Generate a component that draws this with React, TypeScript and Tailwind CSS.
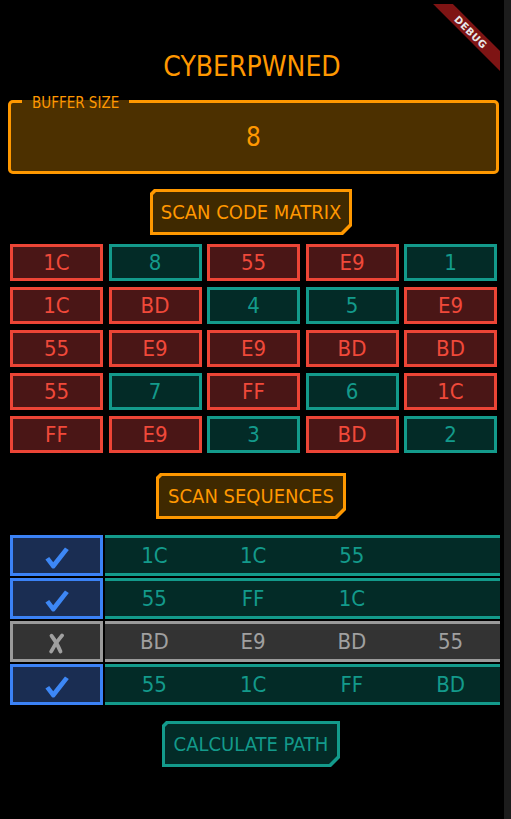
import React from "react";

const font = "font-['Liberation_Sans_Narrow','DejaVu_Sans_Condensed',sans-serif]";

type Tone = "r" | "t";

const matrix: [string, Tone][][] = [
  [["1C", "r"], ["8", "t"], ["55", "r"], ["E9", "r"], ["1", "t"]],
  [["1C", "r"], ["BD", "r"], ["4", "t"], ["5", "t"], ["E9", "r"]],
  [["55", "r"], ["E9", "r"], ["E9", "r"], ["BD", "r"], ["BD", "r"]],
  [["55", "r"], ["7", "t"], ["FF", "r"], ["6", "t"], ["1C", "r"]],
  [["FF", "r"], ["E9", "r"], ["3", "t"], ["BD", "r"], ["2", "t"]],
];

const sequences: { ok: boolean; values: string[] }[] = [
  { ok: true, values: ["1C", "1C", "55", ""] },
  { ok: true, values: ["55", "FF", "1C", ""] },
  { ok: false, values: ["BD", "E9", "BD", "55"] },
  { ok: true, values: ["55", "1C", "FF", "BD"] },
];

function CheckMark() {
  return (
    <svg width="24" height="22" viewBox="0 0 24 22" className="fill-current">
      <path d="M0.4 12.6 L4.2 10 L8.2 15.2 L20 0.4 L23.8 3 L9.8 21 Q8.3 22.2 6.8 21 Z" />
    </svg>
  );
}

function CrossMark() {
  return (
    <svg width="17" height="21" viewBox="0 0 17 21" fill="none" stroke="currentColor" strokeWidth="3.8" strokeLinecap="round">
      <path d="M3.5 2.8 Q8.5 9 12.5 18.5" />
      <path d="M14 2.5 Q8 9 3.2 18.5" />
    </svg>
  );
}

function CutButton({ label, width, teal }: { label: string; width: string; teal?: boolean }) {
  return (
    <div
      className={`mx-auto p-[3px] [clip-path:polygon(4px_0,100%_0,100%_calc(100%_-_9px),calc(100%_-_9px)_100%,0_100%,0_4px)] ${width} ${
        teal ? "bg-[#139a8b]" : "bg-[#ff9800]"
      }`}
    >
      <div
        className={`flex h-[40px] items-center justify-center text-[20px] [clip-path:polygon(3px_0,100%_0,100%_calc(100%_-_8px),calc(100%_-_8px)_100%,0_100%,0_3px)] ${
          teal ? "bg-[#032b27] text-[#139a8b]" : "bg-[#3f2900] text-[#ff9800]"
        }`}
      >
        {label}
      </div>
    </div>
  );
}

export default function App() {
  return (
    <div className={`relative flex h-[819px] w-full overflow-hidden bg-black ${font}`}>
      <main className="w-[504px] px-[8px] pt-[50px]">
        {/* Title */}
        <h1 className="h-[34px] text-center text-[28px] leading-[34px] text-[#ff9800]">CYBERPWNED</h1>

        {/* Buffer size field */}
        <fieldset className="mt-[8px] w-[491px] rounded-[5px] border-[3px] border-[#ff9800] bg-[#4c3000] px-[10px]">
          <legend className="ml-[1px] px-[10px] pt-[4px] text-[15px] leading-[14px] text-[#ff9800]">BUFFER SIZE</legend>
          <div className="flex h-[61px] items-center justify-center pb-[6px] text-[26px] text-[#ff9800]">8</div>
        </fieldset>

        <div className="mt-[15px] pr-[2px]">
          <CutButton label="SCAN CODE MATRIX" width="w-[202px]" />
        </div>

        {/* Code matrix */}
        <div className="ml-[2px] mt-[9px] grid w-[487px] grid-cols-5 gap-x-[5.5px] gap-y-[6px]">
          {matrix.flat().map(([v, tone], i) => (
            <div
              key={i}
              className={`flex h-[37px] items-center justify-center border-[3px] text-[22px] ${
                tone === "r"
                  ? "border-[#ec4536] bg-[#4a1616] text-[#f0493a]"
                  : "border-[#139a8b] bg-[#032b27] text-[#139a8b]"
              }`}
            >
              {v}
            </div>
          ))}
        </div>

        <div className="mt-[20px] pr-[2px]">
          <CutButton label="SCAN SEQUENCES" width="w-[190px]" />
        </div>

        {/* Sequences */}
        <div className="ml-[2px] mt-[16px] flex w-[490px] flex-col gap-[2px]">
          {sequences.map((s, i) => (
            <div key={i} className="flex h-[41px] gap-[2px]">
              <div
                className={`flex w-[93px] items-center justify-center border-[3px] pt-[4px] ${
                  s.ok ? "border-[#3b82f6] bg-[#1a2d52] text-[#3d87f5]" : "border-[#9a9a9a] bg-[#333333] text-[#a0a0a0]"
                }`}
              >
                {s.ok ? <CheckMark /> : <CrossMark />}
              </div>
              <div
                className={`grid flex-1 grid-cols-4 items-center border-y-[3px] text-[22px] ${
                  s.ok ? "border-[#139a8b] bg-[#032b27] text-[#139a8b]" : "border-[#9a9a9a] bg-[#333333] text-[#a0a0a0]"
                }`}
              >
                {s.values.map((v, j) => (
                  <span key={j} className="text-center">
                    {v}
                  </span>
                ))}
              </div>
            </div>
          ))}
        </div>

        <div className="mt-[16px] pr-[2px]">
          <CutButton label="CALCULATE PATH" width="w-[178px]" teal />
        </div>
      </main>

      {/* scrollbar strip */}
      <div className="w-[7px] bg-[#1c1c1c]" />

      {/* Debug banner */}
      <div className="absolute left-[420px] top-[4px] h-[80px] w-[80px] overflow-hidden">
        <div className="absolute left-[-9px] top-[21px] flex h-[14px] w-[120px] rotate-45 items-center justify-center bg-[#7e1414] font-['DejaVu_Sans',sans-serif] text-[10px] font-bold tracking-[0.5px] text-[#e8e8e8]">
          DEBUG
        </div>
      </div>
    </div>
  );
}
